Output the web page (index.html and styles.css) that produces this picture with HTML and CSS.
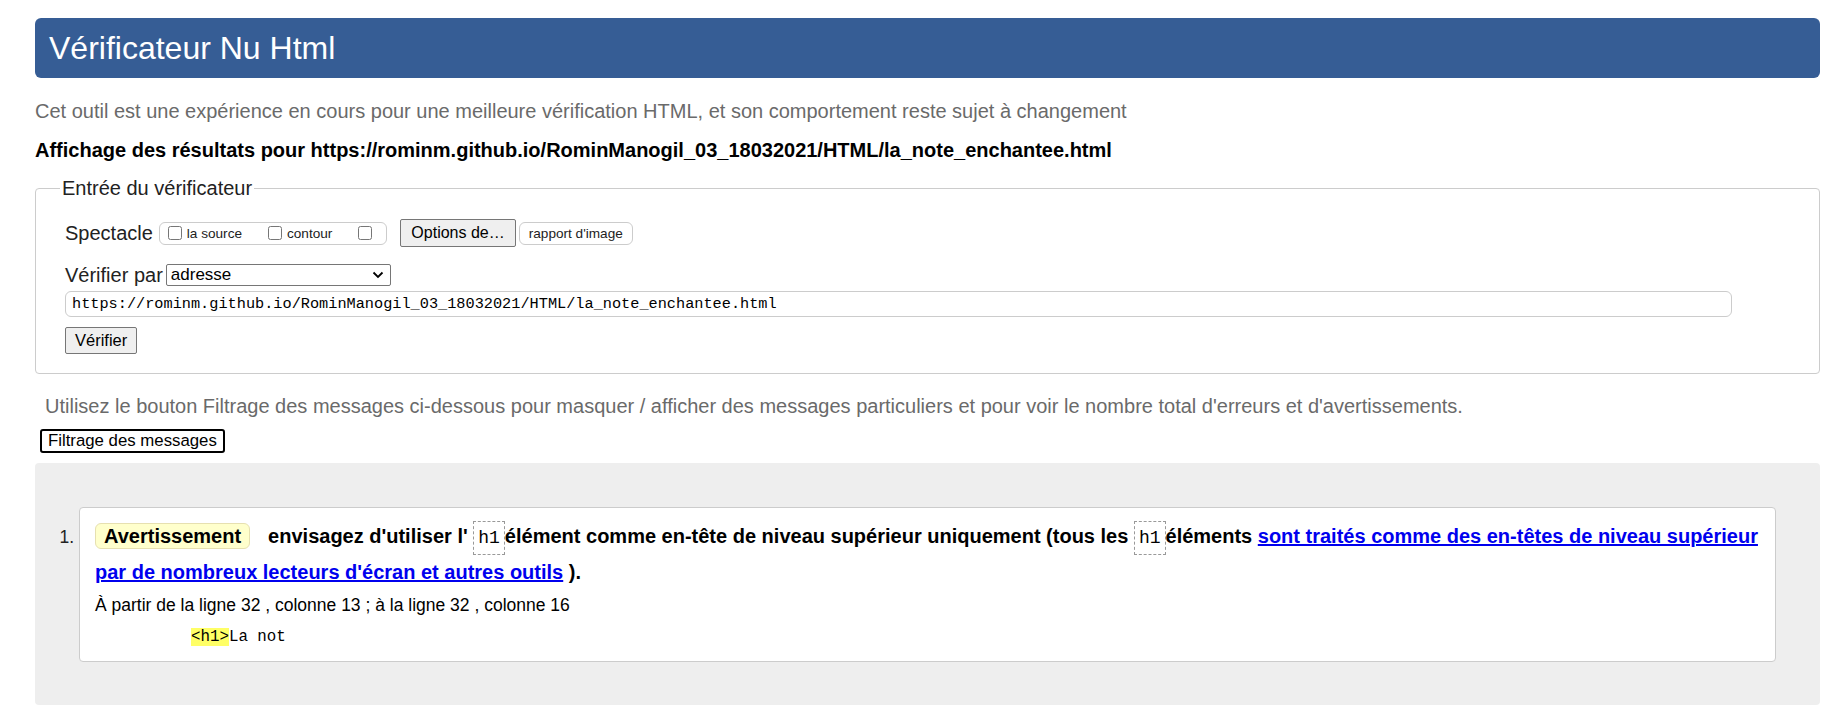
FILE: index.html
```html
<!DOCTYPE html>
<html lang="fr">
<head>
<meta charset="utf-8">
<title>Vérificateur Nu Html</title>
<link rel="stylesheet" href="styles.css">
</head>
<body>
<h1 class="title">Vérificateur Nu Html</h1>
<p class="intro">Cet outil est une expérience en cours pour une meilleure vérification HTML, et son comportement reste sujet à changement</p>
<p class="result">Affichage des résultats pour https://rominm.github.io/RominManogil_03_18032021/HTML/la_note_enchantee.html</p>
<fieldset class="checker">
  <legend>Entrée du vérificateur</legend>
  <div class="row show-row">
    <span class="row-label">Spectacle</span>
    <span class="group">
      <label class="opt"><input type="checkbox">la source</label>
      <label class="opt"><input type="checkbox">contour</label>
      <label class="opt"><input type="checkbox"></label>
    </span>
    <button class="btn-options" type="button">Options de…</button>
    <span class="pill">rapport d'image</span>
  </div>
  <div class="row by-row">
    <span class="row-label">Vérifier par</span>
    <span class="select">adresse<svg class="chev" width="12" height="8" viewBox="0 0 12 8"><path d="M1.5 1.5 L6 6 L10.5 1.5" fill="none" stroke="#000" stroke-width="1.8"/></svg></span>
  </div>
  <div class="url">https://rominm.github.io/RominManogil_03_18032021/HTML/la_note_enchantee.html</div>
  <button class="btn-check" type="button">Vérifier</button>
</fieldset>
<p class="hint">Utilisez le bouton Filtrage des messages ci-dessous pour masquer / afficher des messages particuliers et pour voir le nombre total d'erreurs et d'avertissements.</p>
<button class="btn-filter" type="button">Filtrage des messages</button>
<div class="results">
  <ol class="messages">
    <li class="msg">
      <p class="msg-text"><span class="badge">Avertissement</span><span class="gap"></span>envisagez d'utiliser l' <code class="tag">h1</code>élément comme en-tête de niveau supérieur uniquement (tous les <code class="tag">h1</code>éléments <a href="#">sont traités comme des en-têtes de niveau supérieur par de nombreux lecteurs d'écran et autres outils</a> ).</p>
      <p class="loc">À partir de la ligne 32 , colonne 13 ; à la ligne 32 , colonne 16</p>
      <p class="extract"><mark>&lt;h1&gt;</mark>La not</p>
    </li>
  </ol>
</div>
</body>
</html>
```
FILE: styles.css
```css
html, body {
  background: #fff;
}
body {
  margin: 0;
  padding: 18px 20px 0 35px;
  font-family: "Liberation Sans", Arial, sans-serif;
  color: #000;
}
.title {
  margin: 0;
  height: 60px;
  background: #365d95;
  color: #fff;
  font-size: 32px;
  font-weight: normal;
  line-height: 60px;
  padding-left: 14px;
  border-radius: 6px;
}
.intro {
  margin: 22px 0 0;
  color: #6a6a6a;
  font-size: 20px;
  line-height: 22px;
}
.result {
  margin: 17px 0 0;
  font-weight: bold;
  font-size: 20px;
  line-height: 22px;
}
.checker {
  margin: 16px 0 0;
  border: 1px solid #ccc;
  border-radius: 4px;
  padding: 0 0 19px 29px;
  min-width: 0;
}
.checker legend {
  font-size: 20px;
  line-height: 22px;
  padding: 0 2px;
  margin-left: -5px;
  color: #222;
}
.row {
  display: flex;
  align-items: center;
}
.show-row {
  height: 28px;
  margin-top: 20px;
}
.row-label {
  font-size: 20px;
  color: #222;
}
.group {
  display: inline-flex;
  align-items: center;
  height: 21px;
  margin-left: 6px;
  border: 1px solid #ccc;
  border-radius: 6px;
  padding: 0 14px 0 8px;
}
.opt {
  display: inline-flex;
  align-items: center;
  font-size: 13.6px;
  color: #222;
  margin-right: 26px;
}
.opt:last-child {
  margin-right: 0;
}
.opt input {
  margin: 0 5px 0 0;
  width: 14px;
  height: 14px;
}
.opt:last-child input {
  margin-right: 0;
}
.btn-options {
  margin-left: 13px;
  height: 28px;
  padding: 0 10px;
  font-family: "Liberation Sans", Arial, sans-serif;
  font-size: 16px;
  background: #efefef;
  border: 1px solid #767676;
  border-radius: 2px;
  color: #000;
}
.pill {
  margin-left: 3px;
  display: inline-flex;
  align-items: center;
  height: 21px;
  padding: 0 9px;
  border: 1px solid #ccc;
  border-radius: 6px;
  font-size: 13.6px;
  color: #222;
}
.by-row {
  height: 24px;
  margin-top: 16px;
}
.select {
  margin-left: 3px;
  width: 225px;
  height: 22px;
  box-sizing: border-box;
  border: 1px solid #767676;
  border-radius: 2px;
  display: flex;
  align-items: center;
  justify-content: space-between;
  padding: 0 6px 0 4px;
  font-size: 17px;
  color: #000;
}
.url {
  margin-top: 4px;
  width: 1667px;
  height: 26px;
  box-sizing: border-box;
  border: 1px solid #ccc;
  border-radius: 6px;
  padding: 0 6px;
  font-family: "Liberation Mono", "DejaVu Sans Mono", monospace;
  font-size: 15.25px;
  line-height: 24px;
  color: #000;
}
.btn-check {
  display: block;
  margin-top: 10px;
  height: 27px;
  padding: 0 9px;
  font-family: "Liberation Sans", Arial, sans-serif;
  font-size: 16.5px;
  background: #efefef;
  border: 1px solid #767676;
  border-radius: 2px;
  color: #000;
}
.hint {
  margin: 21px 0 0 10px;
  color: #6a6a6a;
  font-size: 20px;
  line-height: 22px;
}
.btn-filter {
  display: block;
  margin: 12px 0 0 5px;
  height: 24px;
  padding: 0 6px;
  font-family: "Liberation Sans", Arial, sans-serif;
  font-size: 16.8px;
  background: #fff;
  border: 2px solid #000;
  border-radius: 3px;
  color: #000;
}
.results {
  margin-top: 10px;
  background: #eee;
  border-radius: 4px;
  padding: 44px 44px 43px;
}
.messages {
  margin: 0;
  padding: 0;
  list-style: decimal outside;
  font-size: 17.5px;
}
.msg {
  background: #fff;
  border: 1px solid #ccc;
  border-radius: 4px;
  padding: 10px 12px 14px 15px;
}
.msg::marker {
  color: #222;
}
.msg-text {
  margin: 0;
  font-size: 20px;
  font-weight: bold;
  line-height: 36px;
}
.badge {
  display: inline-block;
  background: #ffc;
  border: 1px solid #e6e0b0;
  border-radius: 6px;
  padding: 0 8px;
  line-height: 24px;
}
.gap {
  display: inline-block;
  width: 18px;
}
.tag {
  font-family: "Liberation Mono", "DejaVu Sans Mono", monospace;
  font-weight: normal;
  font-size: 18px;
  border: 1px dashed #999;
  padding: 6px 4px;
  line-height: 20px;
}
.msg-text a {
  color: #00e;
  text-decoration: underline;
}
.loc {
  margin: 5px 0 0;
  font-size: 17.5px;
  line-height: 20px;
}
.extract {
  margin: 12px 0 0 96px;
  font-family: "Liberation Mono", "DejaVu Sans Mono", monospace;
  font-size: 15.8px;
  line-height: 20px;
}
.extract mark {
  background: #ff6;
  color: #000;
}
```
